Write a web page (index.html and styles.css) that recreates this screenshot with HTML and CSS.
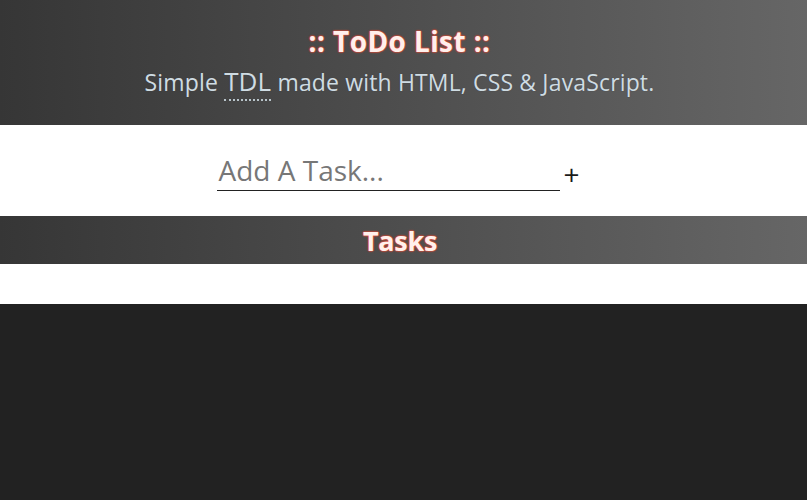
FILE: index.html
```html
<!DOCTYPE html>
<html lang="en">
<head>
<meta charset="utf-8">
<title>ToDo List</title>
<link rel="stylesheet" href="styles.css">
</head>
<body>
<header class="hero">
  <h1 class="title">:: ToDo List ::</h1>
  <p class="subtitle">Simple <abbr class="abbr" title="ToDo List">TDL</abbr> made with HTML, CSS &amp; JavaScript.</p>
</header>
<section class="adder">
  <input class="task-input" type="text" placeholder="Add A Task...">
  <button class="add-btn" type="button">+</button>
</section>
<section class="tasks-head">
  <h2 class="tasks-title">Tasks</h2>
</section>
<ul class="task-list"></ul>
</body>
</html>
```
FILE: styles.css
```css
html, body {
  margin: 0;
  padding: 0;
}
body {
  background: #222222;
  font-family: "Open Sans", "Noto Sans", sans-serif;
}
.hero {
  height: 125px;
  box-sizing: border-box;
  background: linear-gradient(to right, #363636, #666666);
  display: flex;
  flex-direction: column;
  align-items: center;
  padding: 22px 8px 0 0;
}
.title {
  margin: 0;
  font-size: 28px;
  line-height: 38px;
  font-weight: 700;
  letter-spacing: 0.4px;
  color: #fff0ec;
  text-shadow: 0 0 1px #e24a35, 0 0 1px #e24a35, 0 0 2px #e24a35, 0 0 2px #e24a35;
}
.subtitle {
  margin: 5px 0 0;
  font-size: 23px;
  line-height: 32px;
  letter-spacing: 0.15px;
  color: #cfdce3;
  text-shadow: 0 0 1px #444;
}
.abbr {
  font-size: 26px;
  text-decoration: none;
  border-bottom: 2px dotted #b8c4ca;
}
.adder {
  height: 91px;
  background: #ffffff;
  display: flex;
  justify-content: center;
  align-items: center;
  gap: 3px;
  padding-right: 10px;
  box-sizing: border-box;
}
.task-input {
  width: 343px;
  box-sizing: border-box;
  border: none;
  border-bottom: 1px solid #222;
  padding: 0 0 0 1px;
  font-family: "Open Sans", "Noto Sans", sans-serif;
  font-size: 28px;
  line-height: 38px;
  height: 40px;
  outline: none;
  color: #333;
}
.task-input::placeholder {
  color: #777777;
}
.add-btn {
  border: none;
  background: none;
  padding: 0;
  font-family: "Open Sans", "Noto Sans", sans-serif;
  font-size: 28px;
  line-height: 32px;
  color: #1a1a1a;
  margin-top: 6px;
  cursor: pointer;
}
.tasks-head {
  height: 48px;
  box-sizing: border-box;
  padding-right: 7px;
  background: linear-gradient(to right, #363636, #666666);
  display: flex;
  justify-content: center;
  align-items: center;
}
.tasks-title {
  margin: 0;
  font-size: 27px;
  font-weight: 700;
  letter-spacing: -0.3px;
  color: #fff0ec;
  text-shadow: 0 0 1px #e24a35, 0 0 1px #e24a35, 0 0 2px #e24a35, 0 0 2px #e24a35;
}
.task-list {
  margin: 0;
  padding: 0;
  list-style: none;
  height: 40px;
  background: #ffffff;
}
```
